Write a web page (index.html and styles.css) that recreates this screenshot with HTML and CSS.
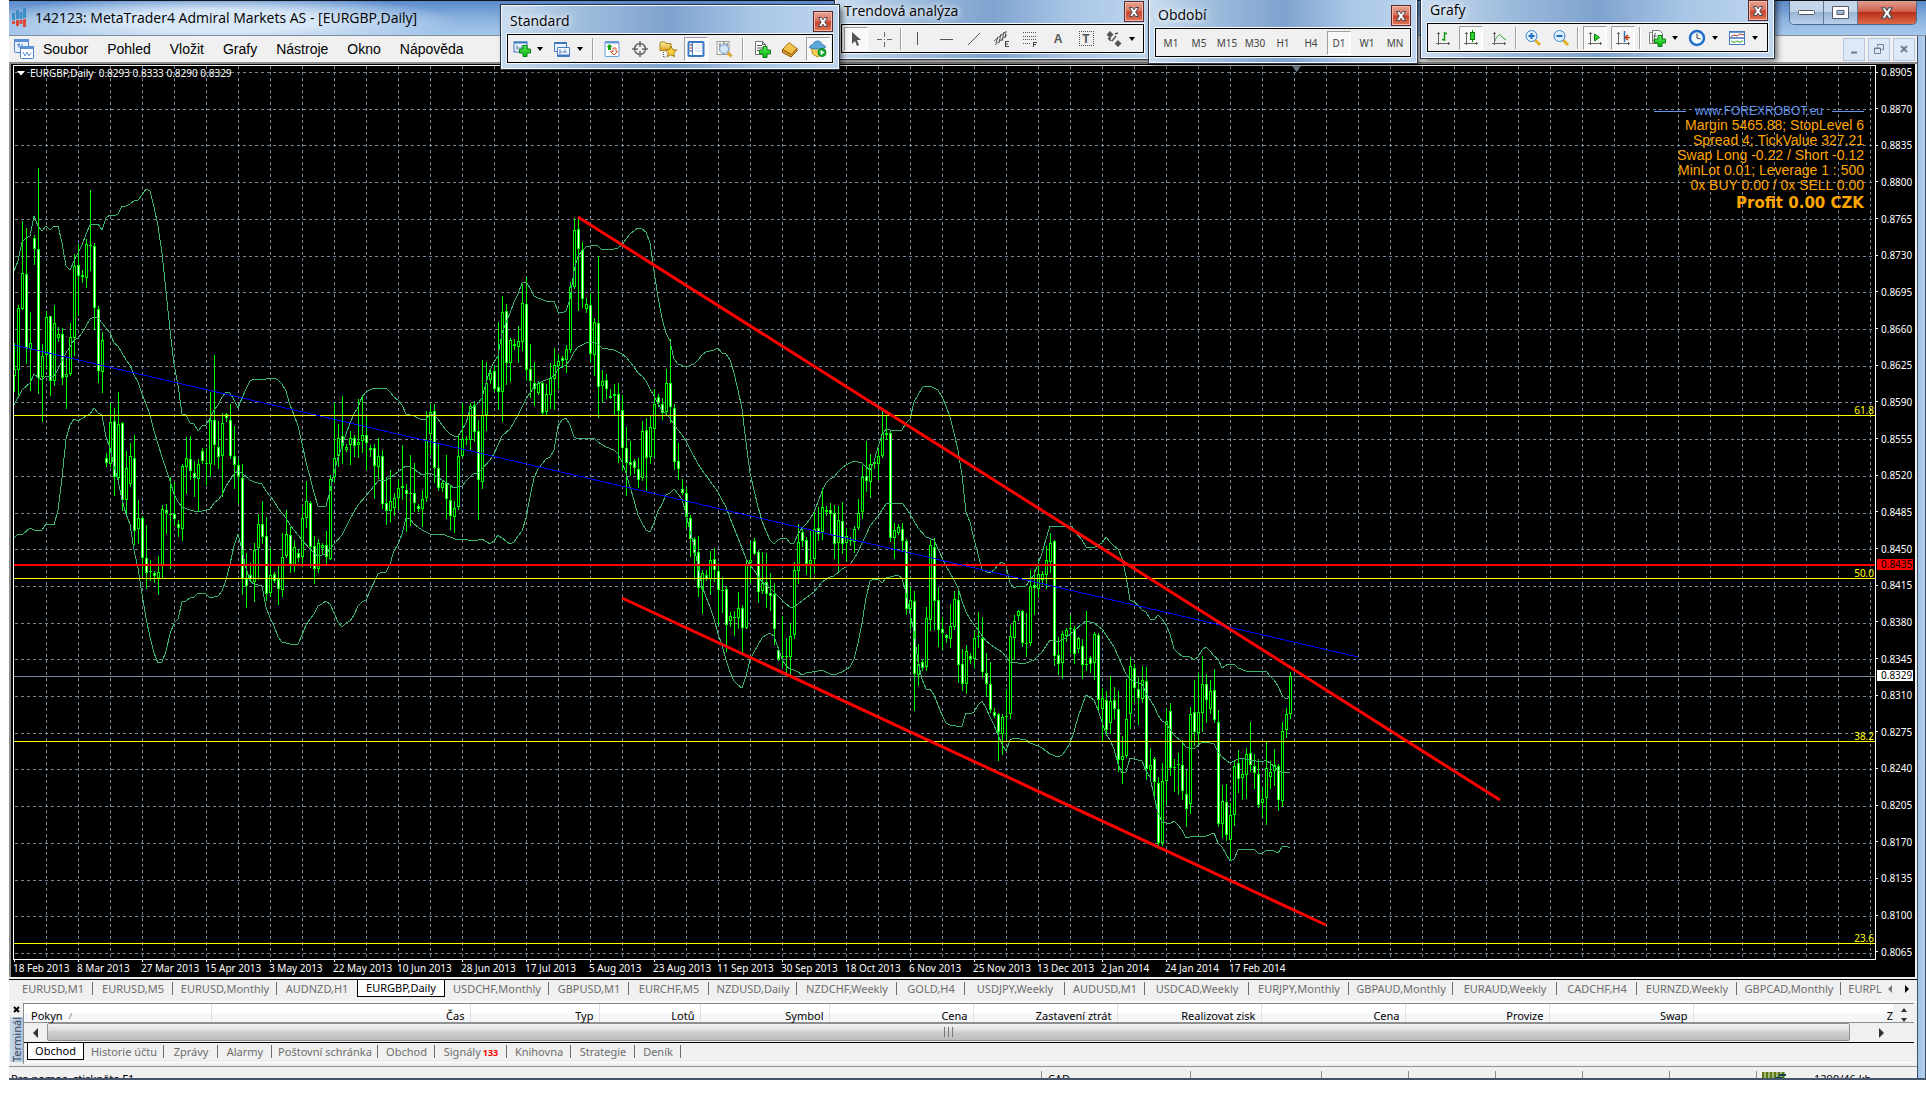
FILE: index.html
```html
<!DOCTYPE html>
<html lang="cs">
<head>
<meta charset="utf-8">
<title>142123: MetaTrader4 Admiral Markets AS - [EURGBP,Daily]</title>
<link rel="stylesheet" href="styles.css">
</head>
<body>
<svg class="defs" width="0" height="0" aria-hidden="true">
  <defs>
    <linearGradient id="gGreen" x1="0" y1="0" x2="0" y2="1"><stop offset="0" stop-color="#5df05d"/><stop offset="1" stop-color="#06b506"/></linearGradient>
    <linearGradient id="gGold" x1="0" y1="0" x2="0" y2="1"><stop offset="0" stop-color="#fff0a0"/><stop offset="1" stop-color="#d9a520"/></linearGradient>
    <symbol id="plus" viewBox="0 0 12 12"><path d="M4 .5h4V4h3.500v4H8v3.500H4V8H.5V4H4z" fill="url(#gGreen)" stroke="#0a7d14"/></symbol>
    <symbol id="axes" viewBox="0 0 18 18"><path d="M4.500 3v13M2 14.500h14M3 4.500h3M14.500 13v3" fill="none" stroke="#666"/></symbol>
    <symbol id="close" viewBox="0 0 12 12"><path d="M1.500 1.500h3L6 3.800l1.500-2.300h3L7.800 6l2.700 4.500h-3L6 8.200l-1.500 2.300h-3L4.200 6z" fill="#fff" stroke="#4a4a55"/></symbol>
    <symbol id="drop" viewBox="0 0 6 4"><path d="M0 0h6L3 4z" fill="#000"/></symbol>
  </defs>
</svg>

<div class="app">
  <header class="titlebar">
    <svg class="logo" viewBox="0 0 14 20" width="14" height="20"><path d="M0 5h3v7H0zM4 2h3v9H4zM7.500 4h3v7h-3zM11 0h3v10h-3z" fill="#3c8dc5"/><path d="M0 13h3v3H0zM4 12h3v6H4zM7.500 12h3v4h-3zM11 11h3v8h-3z" fill="#d9483b"/></svg>
    <h1 class="title">142123: MetaTrader4 Admiral Markets AS - [EURGBP,Daily]</h1>
    <div class="winctl">
      <button class="wbtn" aria-label="Minimalizovat"><svg width="18" height="6" viewBox="0 0 18 6"><rect x=".5" y=".5" width="16" height="4" rx="1" fill="#fff" stroke="#555b66"/></svg></button>
      <button class="wbtn" aria-label="Maximalizovat"><svg width="18" height="14" viewBox="0 0 18 14"><path d="M.5.5h16v12H.5zM5 4.500v4h7v-4z" fill="#fff" fill-rule="evenodd" stroke="#555b66"/></svg></button>
      <button class="wbtn wclose" aria-label="Zavřít"><svg width="16" height="14"><use href="#close"/></svg></button>
    </div>
  </header>

  <nav class="menubar">
    <svg class="menuicon" width="20" height="20" viewBox="0 0 20 20"><rect x=".5" y=".5" width="14" height="13" rx="1" fill="#e8f1fc" stroke="#4f81c7"/><rect x="0" y="0" width="15" height="3" fill="#5b8fd6"/><path d="M3 6h3M5 4v5M8 5v4" stroke="#4f81c7"/><rect x="6.500" y="7.500" width="13" height="12" rx="1" fill="#fff" stroke="#4f81c7"/><rect x="6" y="7" width="14" height="3" fill="#5b8fd6"/><path d="M9 13l2 4 2-4 2 4 2-3" fill="none" stroke="#5a8fd0"/></svg>
    <button class="menu">Soubor</button><button class="menu">Pohled</button><button class="menu">Vložit</button><button class="menu">Grafy</button><button class="menu">Nástroje</button><button class="menu">Okno</button><button class="menu">Nápověda</button>
    <div class="mdictl">
      <button class="mdi" aria-label="Minimalizovat graf"><svg width="12" height="12"><path d="M3 9.500h6" stroke="#6b7f95" stroke-width="2"/></svg></button>
      <button class="mdi" aria-label="Obnovit graf"><svg width="12" height="12"><path d="M4.500 3.500v-2h6v5h-2M1.500 5h6v5.500h-6zM1.500 5.500h6" fill="none" stroke="#6b7f95"/></svg></button>
      <button class="mdi" aria-label="Zavřít graf"><svg width="12" height="12"><path d="M3 3l6 6M9 3l-6 6" stroke="#6b7f95" stroke-width="2"/></svg></button>
    </div>
  </nav>

  <main class="chart">
    <div class="plotrow">
      <div class="plot">
        <svg id="plot" class="plotsvg" role="img" aria-label="EURGBP, Daily"></svg>
        <div class="quote"><svg width="8" height="5" viewBox="0 0 8 5"><path d="M0 0h8L4 4.500z" fill="#fff"/></svg><span>EURGBP,Daily&nbsp; 0.8293 0.8333 0.8290 0.8329</span></div>
        <svg class="shift" width="9" height="6" viewBox="0 0 9 6"><path d="M0 0h9L4.500 6z" fill="#778899"/></svg>
        <div class="info">
          <div class="site"><i></i><span>www.FOREXROBOT.eu</span><i></i></div>
          <div>Margin 5465.88; StopLevel 6</div>
          <div>Spread 4; TickValue 327.21</div>
          <div>Swap Long -0.22 / Short -0.12</div>
          <div>MinLot 0.01; Leverage 1 : 500</div>
          <div>0x BUY 0.00 / 0x SELL 0.00</div>
          <div class="profit">Profit 0.00 CZK</div>
        </div>
        <span class="fib f618">61.8</span><span class="fib f500">50.0</span><span class="fib f382">38.2</span><span class="fib f236">23.6</span>
      </div>
      <div class="prices" id="prices"><span class="mark red">0.8435</span><span class="mark now">0.8329</span></div>
    </div>
    <div class="dates" id="dates"></div>
  </main>

  <div class="symbols">
    <div class="symlist">
      <button class="tab w80">EURUSD,M1</button><button class="tab w80">EURUSD,M5</button><button class="tab w104">EURUSD,Monthly</button><button class="tab w80 last">AUDNZD,H1</button><button class="tab w88 active">EURGBP,Daily</button><button class="tab w104">USDCHF,Monthly</button><button class="tab w80">GBPUSD,M1</button><button class="tab w80">EURCHF,M5</button><button class="tab w88">NZDUSD,Daily</button><button class="tab w100">NZDCHF,Weekly</button><button class="tab w68">GOLD,H4</button><button class="tab w100">USDJPY,Weekly</button><button class="tab w80">AUDUSD,M1</button><button class="tab w104">USDCAD,Weekly</button><button class="tab w100">EURJPY,Monthly</button><button class="tab w104">GBPAUD,Monthly</button><button class="tab w104">EURAUD,Weekly</button><button class="tab w80">CADCHF,H4</button><button class="tab w100">EURNZD,Weekly</button><button class="tab w104">GBPCAD,Monthly</button><button class="tab w48 last">EURPL</button>
    </div>
    <button class="arrow" aria-label="Předchozí"><svg width="5" height="8"><path d="M4 0v8L0 4z" fill="#777"/></svg></button>
    <button class="arrow" aria-label="Další"><svg width="5" height="8"><path d="M0 0v8l4-4z" fill="#000"/></svg></button>
  </div>

  <section class="terminal">
    <div class="side"><button class="x" aria-label="Zavřít terminál"><svg width="7" height="7"><path d="M1 1l5 5M6 1L1 6" stroke="#000" stroke-width="2"/></svg></button><span class="vert">Terminál</span></div>
    <div class="panel">
      <div class="tablerow">
        <table class="orders">
          <colgroup><col class="c187"><col class="c259"><col class="c129"><col class="c101"><col class="c129"><col class="c144"><col class="c144"><col class="c144"><col class="c144"><col class="c144"><col class="c144"><col></colgroup>
          <thead><tr><th class="first">Pokyn &nbsp;<svg width="7" height="8"><path d="M1 7l3-6" stroke="#888"/></svg></th><th>Čas</th><th>Typ</th><th>Lotů</th><th>Symbol</th><th>Cena</th><th>Zastavení ztrát</th><th>Realizovat zisk</th><th>Cena</th><th>Provize</th><th>Swap</th><th class="end">Z</th></tr></thead>
        </table>
        <div class="spin"><svg width="8" height="14"><path d="M1 4h6L4 0zM1 10h6l-3 4z" fill="#333"/></svg></div>
      </div>
      <div class="scroll"><button class="sarrow" aria-label="Vlevo"><svg width="6" height="10"><path d="M5 0v10L0 5z" fill="#333"/></svg></button><div class="thumb"><svg width="11" height="10"><path d="M1.500 0v10M5.500 0v10M9.500 0v10" stroke="#777"/></svg></div><button class="sarrow wide" aria-label="Vpravo"><svg width="6" height="10"><path d="M0 0v10l5-5z" fill="#333"/></svg></button></div>
      <div class="ttabs">
        <button class="tab w57 active">Obchod</button><button class="tab w80">Historie účtu</button><button class="tab w54">Zprávy</button><button class="tab w54">Alarmy</button><button class="tab w106">Poštovní schránka</button><button class="tab w57">Obchod</button><button class="tab w72">Signály <b>133</b></button><button class="tab w64">Knihovna</button><button class="tab w64">Strategie</button><button class="tab w46">Deník</button>
      </div>
    </div>
  </section>

  <footer class="status">
    <span class="help">Pro pomoc, stiskněte F1</span><span class="s149">CAD</span><span class="s131"></span><span class="s87"></span><span class="s87"></span><span class="s87"></span><span class="s87"></span><span class="s87"></span>
    <span class="net"><svg width="24" height="10"><path d="M1 0v10M5 0v10M9 0v10M13 0v10M17 0v10M21 0v10" stroke="#5b7a0c" stroke-width="3"/><path d="M13 6h7M17 3h7" stroke="#123c5c" stroke-width="2"/></svg>1290/46 kb</span>
  </footer>
</div>

<section class="win w-std">
  <div class="wt"><span>Standard</span><button class="wx" aria-label="Zavřít"><svg width="14" height="12"><use href="#close"/></svg></button></div>
  <div class="tb">
    <span class="grp"><button class="ib" aria-label="Nový graf"><svg viewBox="0 0 18 18"><rect x="1" y="2" width="13" height="10" fill="#eaf2fc" stroke="#3f78c0"/><path d="M1 2.500h13" stroke="#3f78c0" stroke-width="2"/><path d="M4 5v5M3 8h8M9 5v3" stroke="#6d90b8" fill="none"/><use href="#plus" x="6" y="5" width="12" height="12"/></svg></button><button class="dd" aria-label="Více"><svg><use href="#drop"/></svg></button></span>
    <span class="grp"><button class="ib" aria-label="Profily"><svg viewBox="0 0 18 18"><path d="M1.500 2.500h12v9h-12z" fill="#eaf2fc" stroke="#4a7fc2"/><path d="M1 3h13" stroke="#3f78c0" stroke-width="2"/><path d="M4.500 7.500h12v9h-12z" fill="#f4f8fe" stroke="#4a7fc2"/><path d="M4 15.500h13" stroke="#3f78c0" stroke-width="2"/><path d="M7 9v5M6 12h8M12 9v4" stroke="#6d90b8"/></svg></button><button class="dd" aria-label="Více"><svg><use href="#drop"/></svg></button></span>
    <i class="sep wide"></i>
    <button class="ib" aria-label="Přehled trhu"><svg viewBox="0 0 18 18"><rect x="2" y="1.500" width="14" height="15" rx="1" fill="#fff" stroke="#6a9ad8"/><path d="M2 2.500h14" stroke="#6a9ad8" stroke-width="2"/><path d="M6.500 4l3 3H8v3H5V7H3.500z" fill="#19a319"/><path d="M11 15l3.500-3.500H13V8h-3v3.500H7.500z" fill="#fff" stroke="#e2562a"/></svg></button>
    <button class="ib" aria-label="Datové okno"><svg viewBox="0 0 18 18"><circle cx="9" cy="9" r="5.500" fill="none" stroke="#666" stroke-width="1.500"/><path d="M9 1v6M9 11v6M1 9h6M11 9h6" stroke="#666" stroke-width="1.500"/></svg></button>
    <button class="ib" aria-label="Navigátor"><svg viewBox="0 0 18 18"><path d="M1 3l1-1h4l1 1.500h5v7H1z" fill="url(#gGold)" stroke="#a8821b"/><path d="M4.500 12v5h3" fill="none" stroke="#555" stroke-dasharray="1 1"/><path d="M12 6l1.700 3.700 4 .4-3 2.700.9 4L12 14.700l-3.600 2.100.9-4-3-2.700 4-.4z" fill="#ffd23c" stroke="#a07a10"/></svg></button>
    <button class="ib on" aria-label="Terminál"><svg viewBox="0 0 18 18"><rect x="1.500" y="2" width="15" height="14" rx="1" fill="#fff" stroke="#3b78c4" stroke-width="2"/><path d="M5.500 3v12" stroke="#3b78c4"/><path d="M3 5h2M3 11h2" stroke="#222"/><path d="M3 8h2" stroke="#d22"/><path d="M8 5h7M8 8h7M8 11h7" stroke="#c9d8ea"/></svg></button>
    <button class="ib" aria-label="Tester strategií"><svg viewBox="0 0 18 18"><rect x="2" y="1.500" width="12" height="13" fill="#f5f5f0" stroke="#9a9a9a"/><path d="M5 3v8M9 2v5M12 3v5" stroke="#555"/><circle cx="9" cy="9" r="4.500" fill="#cfe6fa" fill-opacity=".9" stroke="#78a7d6"/><path d="M12.500 12.500l4 4" stroke="#e0a52a" stroke-width="3"/></svg></button>
    <i class="sep wide"></i>
    <button class="ib" aria-label="Nový pokyn"><svg viewBox="0 0 18 18"><path d="M2.500 1.500h7l3 3v10h-10z" fill="#fff" stroke="#777"/><path d="M9.500 1.500v3h3M4 5.500h5M4 8h6M4 10.500h5" fill="none" stroke="#555"/><use href="#plus" x="6" y="6" width="12" height="12"/></svg></button>
    <button class="ib" aria-label="MetaEditor"><svg viewBox="0 0 18 18"><path d="M1.500 9.500l6.500-7 8 6-5.500 6z" fill="#f2c14a" stroke="#a8720f"/><path d="M1.500 9.500v3l8.500 4.500 6-6v-2.500l-5.500 6z" fill="#d9992a" stroke="#8f600c"/></svg></button>
    <button class="ib on" aria-label="AutoTrading"><svg viewBox="0 0 18 18"><path d="M2.500 8.500h12l-1 5-5 3.500-5-3z" fill="#f5cf52" stroke="#b58f1b"/><path d="M.5 7.500c0-2 3-3 4-3.500 0-4 8-4 8 0 1 .5 4 1.500 4 3.500-4 2-12 2-16 0z" fill="#5da9dc" stroke="#3b83b8"/><circle cx="13" cy="12.500" r="4" fill="#1fb53a" stroke="#0d7f23"/><path d="M11.700 10v5l3.500-2.500z" fill="#fff"/></svg></button>
  </div>
</section>

<section class="win w-trend">
  <div class="wt"><span>Trendová analýza</span><button class="wx" aria-label="Zavřít"><svg width="14" height="12"><use href="#close"/></svg></button></div>
  <div class="tb">
    <button class="ib on" aria-label="Kurzor"><svg viewBox="0 0 18 18"><path d="M5 2v12l3-3 2 5 2-1-2-5h4z" fill="#555"/></svg></button>
    <button class="ib" aria-label="Zaměřovač"><svg viewBox="0 0 18 18"><path d="M9.500 2v5M9.500 12v5M2 9.500h5M12 9.500h5M9 9.500h1" stroke="#666" fill="none"/></svg></button>
    <i class="sep"></i>
    <button class="ib" aria-label="Svislá čára"><svg viewBox="0 0 18 18"><path d="M8.500 2v13" stroke="#555"/></svg></button>
    <button class="ib" aria-label="Vodorovná čára"><svg viewBox="0 0 18 18"><path d="M3 9.500h13" stroke="#555"/></svg></button>
    <button class="ib" aria-label="Trendová čára"><svg viewBox="0 0 18 18"><path d="M3 15L15 3" stroke="#555"/></svg></button>
    <button class="ib" aria-label="Kanál"><svg viewBox="0 0 18 18"><path d="M1 11L12 2M2 15L14 5M3 13l2-6M6 13l2-9M9 11l2-9M12 8l1-7" stroke="#555"/><path d="M12.500 11.500v5M12 11.500h4M12 14h3M12 16.500h4" stroke="#444" fill="none"/></svg></button>
    <button class="ib" aria-label="Fibonacci"><svg viewBox="0 0 18 18"><path d="M2 2.500h14M2 6.500h14M2 9.500h14M2 13.500h8" stroke="#555" stroke-dasharray="1 1"/><path d="M12.500 12v5M12 12.500h4M12 14.500h3" stroke="#444" fill="none"/></svg></button>
    <button class="ib txt" aria-label="Text">A</button>
    <button class="ib txt" aria-label="Textový popisek"><span class="tl">T</span></button>
    <span class="grp"><button class="ib" aria-label="Šipky"><svg viewBox="0 0 18 18"><path d="M5 1l3.500 3.500L5 8 1.500 4.500zM13 10l3.500 3.500L13 17l-3.500-3.500z" fill="#555"/><path d="M7 11l4-5M3 8l3 3M10 4l3-1M5 6v4" stroke="#555" stroke-width="1.500"/></svg></button><button class="dd" aria-label="Více"><svg><use href="#drop"/></svg></button></span>
  </div>
</section>

<section class="win w-per">
  <div class="wt"><span>Období</span><button class="wx" aria-label="Zavřít"><svg width="14" height="12"><use href="#close"/></svg></button></div>
  <div class="tb pad">
    <button class="ib tf">M1</button><button class="ib tf">M5</button><button class="ib tf">M15</button><button class="ib tf">M30</button><button class="ib tf">H1</button><button class="ib tf">H4</button><button class="ib tf on">D1</button><button class="ib tf">W1</button><button class="ib tf">MN</button>
  </div>
</section>

<section class="win w-graf">
  <div class="wt"><span>Grafy</span><button class="wx" aria-label="Zavřít"><svg width="14" height="12"><use href="#close"/></svg></button></div>
  <div class="tb pad">
    <button class="ib" aria-label="Sloupcový graf"><svg viewBox="0 0 18 18"><use href="#axes"/><path d="M10.500 3v9M8 10.500h2.500M10.500 4.500H13" stroke="#159a15" stroke-width="1.500" fill="none"/></svg></button>
    <button class="ib on" aria-label="Svíčkový graf"><svg viewBox="0 0 18 18"><use href="#axes"/><path d="M10.500 1v12" stroke="#0b7d0b"/><rect x="8.500" y="3.500" width="4" height="7" fill="#2fd32f" stroke="#0b7d0b"/></svg></button>
    <button class="ib" aria-label="Čárový graf"><svg viewBox="0 0 18 18"><use href="#axes"/><path d="M5 12c2-6 5-8 7-4l4 3" stroke="#2fa02f" fill="none"/></svg></button>
    <i class="sep"></i>
    <button class="ib" aria-label="Přiblížit"><svg viewBox="0 0 18 18"><path d="M11 11l5 5" stroke="#e0b02a" stroke-width="3"/><circle cx="7.500" cy="7" r="5.500" fill="#dff0fd" stroke="#3a84d0"/><path d="M7.500 4v6M4.500 7h6" stroke="#1f6fc0" stroke-width="2"/></svg></button>
    <button class="ib" aria-label="Oddálit"><svg viewBox="0 0 18 18"><path d="M11 11l5 5" stroke="#e0b02a" stroke-width="3"/><circle cx="7.500" cy="7" r="5.500" fill="#dff0fd" stroke="#3a84d0"/><path d="M4.500 7h6" stroke="#1f6fc0" stroke-width="2"/></svg></button>
    <i class="sep"></i>
    <button class="ib on" aria-label="Automatický posun"><svg viewBox="0 0 18 18"><use href="#axes"/><path d="M8.500 5v7l5-3.500z" fill="#2fd32f" stroke="#0b7d0b"/></svg></button>
    <button class="ib on" aria-label="Posun grafu"><svg viewBox="0 0 18 18"><use href="#axes"/><path d="M10.500 2v11" stroke="#2f72b8" stroke-width="1.500"/><path d="M16 8.500h-4M14 6l-3 2.500 3 2.500" stroke="#c0401a" fill="none" stroke-width="1.500"/></svg></button>
    <i class="sep"></i>
    <span class="grp"><button class="ib" aria-label="Indikátory"><svg viewBox="0 0 18 18"><path d="M1.500 3.500h7l2 2v9h-9z" fill="#fff" stroke="#888"/><path d="M4.500 1.500h7l3 3v9h-10z" fill="#fff" stroke="#777"/><path d="M8 4c-2 0-1 8-3 8M5.500 7h3" stroke="#555" fill="none"/><use href="#plus" x="6" y="6" width="12" height="12"/></svg></button><button class="dd" aria-label="Více"><svg><use href="#drop"/></svg></button></span>
    <span class="grp"><button class="ib" aria-label="Periody"><svg viewBox="0 0 18 18"><circle cx="9" cy="9" r="7" fill="#f2f8ff" stroke="#1f6fc9" stroke-width="2.500"/><path d="M9 4.500V9l3.500 1" stroke="#333" fill="none"/></svg></button><button class="dd" aria-label="Více"><svg><use href="#drop"/></svg></button></span>
    <span class="grp"><button class="ib" aria-label="Šablony"><svg viewBox="0 0 18 18"><rect x="1.500" y="2.500" width="15" height="13" fill="#fff" stroke="#3f78c0"/><path d="M1 3h16M1 9h16" stroke="#3f78c0" stroke-width="1.500"/><path d="M3 7.500l3-1.500 3 1 3-2 4 1" stroke="#a33" fill="none"/><path d="M3 12l3 1.500 3-1.500 3 1.500 3-2" stroke="#2a2" fill="none"/></svg></button><button class="dd" aria-label="Více"><svg><use href="#drop"/></svg></button></span>
  </div>
</section>
<script src="chart.js"></script>
</body>
</html>
```
FILE: styles.css
```css
* { box-sizing: border-box; }
body { margin: 0; background: #fff; font: 11px/12px "Noto Sans", "Open Sans", sans-serif; color: #000; overflow-x: hidden; }
button { font: inherit; color: inherit; border: 0; padding: 0; margin: 0; background: none; display: flex; align-items: center; justify-content: center; }
.defs { position: absolute; }

.app { margin-left: 9px; padding-right: 9px; border-top: 1px solid #10131c; border-bottom: 2px solid #45566c;
  background: linear-gradient(to left, #3d5068 1px, #b4d1ef 1px, #a3c3e6 8px, #3d5068 8px, #3d5068 9px, #f0f0f0 9px); }
.titlebar { display: flex; align-items: center; height: 35px; margin-right: -9px; padding-left: 3px; border-bottom: 1px solid #7f8da0;
  background: radial-gradient(ellipse 240px 26px at 210px 20px, #d9e8f7 40%, #d9e8f700 100%), linear-gradient(180deg, #5a8bcb 0, #8db4e0 55%, #a6c8ec 100%); }
.logo { margin-right: 9px; }
.title { margin: 0; font: 14px/20px "Open Sans", "Noto Sans", sans-serif; white-space: nowrap; flex: 1; }
.winctl { display: flex; align-self: flex-start; height: 24px; border: 1px solid #4b6688; border-top: 0; border-radius: 0 0 5px 5px; margin-right: 9px; overflow: hidden; }
.wbtn { width: 34px; background: linear-gradient(#c4d6ea 45%, #9ab5d3 50%, #b9d0ea); border-right: 1px solid #5c7797; }
.wclose { width: 58px; border: 0; background: linear-gradient(#e0a08f 0, #d0604c 45%, #b8301a 50%, #dd6a45); }
.menubar { display: flex; align-items: center; height: 26px; padding-left: 5px; font: 14px/20px "Liberation Sans", Arial, sans-serif; }
.menuicon { margin-right: 9px; }
.menu { margin-right: 19px; }
.mdictl { display: flex; gap: 3px; margin-left: auto; margin-right: 2px; }
.mdi { width: 22px; height: 23px; background: #dde9f6; border: 1px solid #b5c8de; }

.chart { background: #000; border: solid #8c8c8c; border-width: 2px 0 0 2px; box-shadow: inset -2px 0 #f0f0f0; padding: 1px 2px 0; color: #fff; }
.plotrow { display: flex; }
.plot { flex: 1; min-width: 0; position: relative; border: 1px solid #fff; overflow: hidden; }
.plotsvg { display: block; width: 100%; height: 893px; }
.quote { position: absolute; left: 3px; top: 1px; display: flex; gap: 5px; align-items: center; white-space: nowrap; font-size: 10px; }
.shift { position: absolute; left: 1278px; top: 0; }
.info { position: absolute; right: 11px; top: 39px; text-align: right; color: #ffa500; font: 14px/15px "Liberation Sans", Arial, sans-serif; white-space: nowrap; }
.site { display: flex; align-items: center; justify-content: flex-end; gap: 9px; height: 13px; color: #6495ed; }
.site span { font-size: 12px; }
.site i { width: 32px; height: 1px; background: #6495ed; }
.profit { font: bold 15px/20px "DejaVu Sans", Verdana, sans-serif; }
.fib { position: absolute; right: 1px; color: #ff0; font-size: 10px; line-height: 10px; }
.f618 { top: 339px; } .f500 { top: 502px; } .f382 { top: 665px; } .f236 { top: 867px; }
.prices { position: relative; width: 39px; height: 894px; padding: 1px 0; display: flex; flex-direction: column; justify-content: space-between; font-size: 10px; }
.price { display: flex; align-items: center; gap: 3px; }
.price::before { content: ""; width: 2px; height: 1px; background: #fff; }
.mark { position: absolute; left: 1px; width: 36px; height: 11px; line-height: 11px; padding-left: 4px; }
.red { top: 494px; background: #f00; color: #000; }
.now { top: 605px; background: #fff; color: #000; }
.dates { display: flex; height: 17px; overflow: hidden; font-size: 10px; line-height: 12px; }
.date { flex: 0 0 64px; white-space: nowrap; }
.date::before { content: ""; display: block; width: 1px; height: 2px; margin-left: 1px; background: #fff; }

.tab { flex: none; height: 17px; white-space: nowrap; color: #6d6d6d; position: relative; }
.tab::after { content: ""; position: absolute; right: 0; top: 2px; width: 1px; height: 13px; background: #6d6d6d; }
.tab.active { background: #fff; color: #000; border: 1px solid #000; border-top: 0; }
.tab.last::after, .tab.active::after { display: none; }
.w46 { width: 46px; } .w48 { width: 48px; } .w54 { width: 54px; } .w57 { width: 57px; } .w64 { width: 64px; } .w68 { width: 68px; } .w72 { width: 72px; }
.w80 { width: 80px; } .w88 { width: 88px; } .w100 { width: 100px; } .w104 { width: 104px; } .w106 { width: 106px; }
.symbols { display: flex; margin-top: 2px; height: 23px; border-top: 1px solid #000; border-bottom: 1px solid #fff; padding: 0 1px 0 4px; }
.symlist { display: flex; flex: 1; min-width: 0; overflow: hidden; }
.arrow { width: 17px; height: 18px; }

.terminal { display: flex; margin-top: 1px; }
.side { width: 14px; padding: 1px 0 2px; display: flex; flex-direction: column; align-items: center; }
.x { height: 10px; }
.vert { flex: 1; width: 13px; margin-top: 3px; writing-mode: vertical-rl; transform: rotate(180deg); text-align: center; font-size: 11px; line-height: 13px; color: #445; background: linear-gradient(90deg, #aac3dc, #c6d8ea); }
.panel { flex: 1; min-width: 0; margin-right: 3px; border-top: 1px solid #8e8e8e; border-left: 1px solid #8e8e8e; }
.tablerow { display: flex; height: 18px; }
.orders { flex: 1; min-width: 0; table-layout: fixed; width: 100%; border-collapse: collapse; background: linear-gradient(#fff 50%, #f5f6f8 55%); }
.orders th { font-weight: 400; text-align: right; padding: 5px 5px 0 0; height: 18px; line-height: 13px; border-right: 1px solid #dfdfe3; white-space: nowrap; }
.orders th.first { text-align: left; padding-left: 7px; }
.orders th.end { padding-right: 0; border: 0; }
.c187 { width: 187px; } .c259 { width: 259px; } .c129 { width: 129px; } .c101 { width: 101px; } .c144 { width: 144px; }
.spin { width: 21px; display: flex; justify-content: center; align-items: flex-end; }
.scroll { display: flex; height: 20px; border-top: 1px solid #8e8e8e; }
.sarrow { width: 23px; }
.sarrow.wide { width: 64px; }
.thumb { flex: 1; height: 18px; border: 1px solid #909090; border-radius: 2px; background: linear-gradient(#f2f2f2 0, #dedee0 40%, #cdcdd0 50%, #bdbdc0); display: flex; align-items: center; justify-content: center; }
.ttabs { display: flex; border-top: 1px solid #000; padding-left: 3px; height: 21px; border-bottom: 1px solid #fff; }
.ttabs b { color: #f00; font-size: 9px; margin-left: 2px; padding-top: 3px; }

.status { display: flex; height: 12px; overflow: hidden; border-top: 1px solid #8e8e8e; margin-top: 2px; line-height: 14px; padding-top: 4px; white-space: nowrap; }
.status span { padding: 1px 0 0 6px; border-left: 1px solid #8e8e8e; }
.status .help { flex: 1; border: 0; padding-left: 2px; }
.s149 { width: 149px; } .s131 { width: 131px; } .s87 { width: 87px; }
.status .net { width: 161px; display: flex; gap: 28px; padding-left: 5px; }

.win { position: absolute; height: 64px; padding: 0 5px 6px; border: 1px solid #f4f8fc; outline: 1px solid #2a3442;
  background: linear-gradient(90deg, #c9dcef 0, #9dbbdc 25%, #7fa3cf 50%, #a9c6e6 75%, #bfd6ee 100%); box-shadow: 3px 3px 6px #0009; }
.wt { display: flex; justify-content: space-between; height: 28px; padding-left: 3px; }
.wt span { font: 14px/30px "Open Sans", "Noto Sans", sans-serif; text-shadow: 0 0 8px #fff, 0 0 6px #fff; }
.wx { width: 20px; height: 21px; margin-top: 5px; border: 1px solid #5a2a2a; box-shadow: inset 0 0 0 1px #f2b9ac; background: linear-gradient(#e9a695 0, #d9705b 48%, #c6402a 52%, #de7757); }
.tb { display: flex; align-items: center; gap: 4px; height: 29px; padding: 0 0 0 2px; background: #f0f0f0; border: 1px solid #000; outline: 1px solid #f4f8fc; }
.tb.pad { padding-left: 3px; }
.w-std { left: 501px; top: 5px; width: 338px; z-index: 3; }
.w-trend { left: 835px; top: -5px; width: 315px; z-index: 1; }
.w-per { left: 1149px; top: -1px; width: 268px; z-index: 2; }
.w-graf { left: 1421px; top: -6px; width: 353px; z-index: 2; }
.grp { display: flex; }
.ib { width: 24px; height: 24px; flex: none; border: 1px solid transparent; }
.ib svg { width: 18px; height: 18px; }
.ib.on { background: #f8f8f8; border-color: #a0a0a0 #fff #fff #a0a0a0; }
.dd { width: 12px; }
.dd svg { width: 6px; height: 4px; }
.sep { width: 2px; height: 22px; background: #a0a0a0; border-right: 1px solid #fff; }
.sep.wide { margin: 0 2px; }
.tf { font-size: 10px; color: #444; }
.txt { font: bold 12px/16px "Liberation Sans", Arial, sans-serif; color: #555; }
.tl { width: 15px; height: 15px; line-height: 14px; border: 1px dotted #555; }
```
FILE: chart.js
```js
// Daily EURGBP series in drawing blocks. Each block has its own origin and
// vertical divisor; rows are: high, body top, body bottom, low, direction.
const BLOCKS = [
  { start: 0, x: -14, y: 64, k: 2.8, rows: `595 670 690 732 u|490 499 673 738 u|255 399 502 502 u|274 402 610 652 d|510 595 613 727 u|294 301 334 374 d|106 332 695 735 d|598 634 692 815 u|507 524 631 668 u|522 522 702 742 d|490 539 704 715 u|552 570 583 590 u|555 572 695 712 d|638 684 692 778 u|540 580 682 685 u|348 380 583 629 u|320 377 409 517 d|392 406 412 426 u|305 320 415 439 u|168 322 326 392 d|315 324 499 556 d|493 502 676 706 d|566 589 678 733 u|903 918 931 942 d|765 818 934 942 u|778 816 972 1022 d|734 824 975 981 u|818 821 1036 1064 d|898 947 1035 1075 u|877 914 992 998 u|854 917 1122 1158 d|1037 1087 1118 1155 u|1080 1085 1199 1245 d|1105 1197 1241 1281 d|1204 1235 1238 1260 d|1235 1240 1248 1265 d|1194 1238 1253 1298 u|1050 1062 1222 1255 u|1047 1065 1073 1127 d|972 1074 1077 1225 d|985 1074 1090 1105 d|1092 1104 1115 1138 d|936 942 1118 1147 u|860 919 944 1015 u|857 922 956 978 d|927 960 975 1025 d|921 934 978 1064 u|890 900 928 931 d|889 931 934 990 u|734 812 936 968 u|630 813 883 934 d|815 887 915 946 d|791 819 913 1025 u|791 795 807 815 d|768 811 912 918 d|830 914 938 1002 d|920 937 970 1043 d|935 973 1257 1299 d|1185 1256 1278 1335 d|1213 1245 1256 1262 d|1157 1175 1265 1318 u|1075 1104 1170 1256 u|1040 1102 1140 1155 d|1084 1138 1300 1316 d|1170 1247 1297 1306 u|1238 1244 1262 1266 d|1222 1257 1286 1327 d|1128 1196 1289 1305 u|1064 1130 1194 1196 u|1112 1135 1216 1237 d|1148 1168 1222 1236 u|1174 1184 1199 1206 d|1053 1085 1196 1222 u|983 1040 1087 1112 u|1040 1043 1168 1223 d|1136 1166 1228 1267 d|1145 1157 1230 1238 u|1156 1161 1171 1186 u|1122 1163 1196 1212 d|966 976 1200 1202 u|765 917 972 984 u|824 861 914 940 u|745 858 884 932 d|878 887 897 898 u|844 861 883 934 u|855 863 886 913 d|754 873 883 915 u|742 853 870 902 u|803 855 875 950 d|882 891 897 912 u|878 889 942 1030 d|861 912 944 974 u|897 914 1046 1057 d|972 1043 1066 1103 d|953 1040 1068 1096 u|1015 1029 1059 1078 u|978 1001 1031 1062 u|882 998 1003 1032 u|992 1007 1018 1124 d|910 1017 1020 1106 u|932 1016 1043 1066 d|1047 1054 1062 1068 d|1008 1034 1062 1108 u|786 868 1031 1039 u|766 789 852 906 u|767 786 946 986 d|877 945 1003 1009 d|980 988 1003 1011 u|911 987 1034 1085 d|994 1037 1082 1116 d|1038 1059 1084 1125 u|856 912 1056 1060 u|763 864 914 916 u|857 864 868 878 u|765 772 867 892 u|760 769 846 872 d|812 844 980 1088 d` },
  { start: 117, x: 436, y: 114, k: 2.9037, rows: `523 681 876 893 u|528 590 683 725 u|548 559 580 588 u|538 556 606 613 d|412 602 617 665 d|337 384 615 700 u|360 381 532 592 d|459 464 530 584 u|462 477 481 490 d|424 468 484 528 u|302 358 471 494 u|283 361 553 578 d|477 550 585 630 d|528 588 607 653 d|585 590 619 622 u|584 588 676 682 d|592 622 673 680 u|530 576 625 662 u|488 538 579 665 u|505 527 541 604 u|512 518 526 543 d|479 492 523 557 u|296 310 495 498 u|110 146 312 314 u|108 143 199 377 d|180 202 346 370 d|343 361 376 382 u|328 364 506 529 d|402 413 509 567 u|222 416 602 687 d|552 585 599 645 u|562 582 608 633 d|606 626 632 633 d|592 622 628 683 u|590 620 672 820 d|624 669 779 841 d|717 777 823 915 d|758 820 828 857 d|810 815 837 852 d|807 840 870 890 d|701 730 866 871 u|690 727 808 903 d|685 718 805 823 u|608 651 724 800 u|622 631 648 657 d|633 651 678 693 d|549 588 675 679 u|462 590 660 703 d|650 663 818 838 d|765 815 840 868 d|868 896 910 911 d|890 908 978 1008 d|974 980 1043 1093 d|1038 1043 1082 1158 d|1035 1079 1184 1208 d|1132 1142 1187 1257 u|1133 1148 1158 1161 d|1077 1102 1158 1202 u|1070 1100 1133 1163 d|1113 1136 1191 1290 d|1152 1191 1194 1254 d|1178 1189 1293 1368 d|1254 1267 1280 1295 u|1252 1268 1271 1320 u|1196 1244 1271 1300 u|1234 1242 1302 1377 d|1107 1115 1300 1302 u|1048 1102 1111 1167 u|1040 1049 1085 1086 d|1074 1081 1197 1225 d|1080 1170 1192 1198 u|1084 1168 1203 1240 d|1140 1200 1207 1248 d|1170 1203 1305 1348 d|1355 1365 1392 1394 d|1266 1381 1384 1415 d|1330 1383 1386 1432 u|1286 1325 1384 1433 u|1110 1133 1322 1329 u|999 1050 1136 1170 u|1010 1023 1049 1062 d|1036 1046 1115 1143 d|1020 1103 1116 1158 u|965 1014 1100 1140 u|950 1010 1027 1045 d|893 950 1022 1042 u|948 959 963 972 u|938 957 969 1024 d|945 968 1056 1098 d|948 988 1054 1138 u|935 991 1056 1083 d|1010 1035 1053 1106 u|1036 1044 1047 1060 u|1005 1014 1050 1080 u|926 968 1010 1012 u|828 863 963 982 u|758 860 873 903 d|796 825 876 920 u|806 818 826 836 u|778 800 824 868 u|672 737 802 803 u|682 735 739 753 d|730 734 1040 1047 d|995 1017 1039 1098 u|1000 1009 1026 1028 u|997 1012 1047 1077 d|1042 1049 1247 1260 d` },
  { start: 224, x: 866, y: 294, k: 2.9585, rows: `672 710 736 794 u|683 714 928 1034 d|840 900 932 962 u|884 894 912 918 d|732 764 909 916 u|533 548 770 798 u|527 552 714 797 d|672 711 800 846 d|760 797 808 855 d|811 813 823 833 d|722 788 826 850 u|683 708 791 796 u|680 711 903 953 d|855 900 958 975 d|842 862 960 985 u|866 877 886 896 d|800 821 884 908 u|746 817 820 848 u|760 821 924 938 d|868 927 960 994 d|893 958 1034 1040 d|1030 1042 1052 1056 d|1044 1048 1102 1183 d|1046 1057 1105 1166 u|973 1052 1055 1118 u|783 818 1047 1058 u|753 772 821 885 u|740 742 757 769 u|740 744 836 846 d|748 838 841 876 u|622 670 838 843 u|622 667 676 752 d|592 632 678 702 u|625 634 652 662 u|549 593 637 675 u|512 540 597 627 u|532 536 877 902 d|820 872 900 930 d|802 810 897 940 u|793 800 817 832 u|755 794 797 865 u|788 797 871 896 d|820 822 854 864 u|826 847 903 940 d|743 900 903 917 d|875 883 900 922 d|806 811 897 944 u|808 815 1007 1040 d|970 1001 1033 1123 u|980 1005 1096 1105 d|936 1010 1075 1103 u|968 1006 1033 1059 d|980 1032 1184 1216 d|1112 1173 1182 1250 u|944 1063 1171 1176 u|879 906 1048 1090 u|900 912 971 1010 d|937 974 1001 1077 d|905 948 1003 1012 u|908 951 1210 1240 d|1148 1197 1212 1244 u|1175 1181 1249 1299 d|1234 1252 1428 1440 d|1192 1247 1430 1435 u|1030 1069 1246 1315 u|1015 1039 1208 1228 d|1180 1204 1208 1276 d|1162 1194 1199 1285 u|1124 1197 1276 1299 d|1212 1283 1329 1380 d|1028 1048 1315 1340 u|946 1042 1100 1138 d|925 1042 1104 1140 u|877 958 1045 1098 u|930 960 1007 1072 d|946 980 1033 1044 u|914 975 1066 1070 d|1034 1070 1374 1378 d|1258 1306 1374 1410 u|1253 1309 1406 1420 d|1312 1347 1421 1478 u|1186 1200 1345 1376 u|1153 1193 1241 1277 d|1178 1226 1238 1299 u|1148 1167 1229 1296 u|1072 1164 1199 1216 d|1166 1202 1223 1266 d|1180 1226 1318 1321 d|1264 1300 1312 1352 u|1130 1208 1297 1373 u|1186 1220 1235 1265 u|1150 1199 1217 1256 u|1195 1201 1303 1330 d|1072 1099 1306 1320 u|1030 1048 1096 1114 u|924 936 1048 1058 u` }
];

// Bollinger bands: upper, middle, lower; one list of points per block.
const BANDS = [
  ["43,396 55,368 67,314 79,302 91,296 103,242 115,268 127,284 139,268 151,280 163,270 175,270 187,315 199,382 211,392 223,368 247,322 259,290 271,266 283,264 295,264 307,281 319,247 331,238 343,242 355,235 367,212 379,213 391,208 403,198 415,196 427,181 439,166 451,172 463,215 475,270 487,345 499,450 511,560 523,655 535,715 547,795 559,797 571,821 583,823 595,844 607,830 619,826 631,805 643,785 655,770 667,748 679,733 691,737 703,755 715,777 727,750 739,725 751,703 763,697 787,699 811,695 823,695 835,700 847,712 859,732 871,770 883,798 895,828 907,875 919,930 931,972 943,1015 955,1052 979,1052 991,1010 1003,960 1015,915 1027,885 1039,850 1051,820 1063,795 1075,775 1087,748 1099,734 1123,723 1159,723 1171,733 1183,748 1195,757 1207,770 1219,796 1231,797 1243,800 1255,806 1267,813 1279,808 1291,796 1303,797 1315,810 1327,825 1339,840 1351,852 1363,856 1375,856 1387,840 1399,820 1411,780 1423,775 1435,765",
   "97,632 109,590 121,553 133,528 145,512 157,445 169,415 181,387 193,355 205,330 217,298 229,296 241,315 253,338 265,343 289,351 313,350 325,383 337,387 349,380 361,345 373,265 385,220 397,206 409,194 433,190 445,193 457,204 493,201 505,197 517,189 529,172 541,158 553,147 565,140 577,142 589,150 601,184 613,264 625,340 637,400 649,444 661,468 673,521 685,533 709,543 733,535 745,522 757,509 769,498 793,495 805,488 817,502 829,504 841,522 853,560 865,610 877,665 889,760 901,850 913,900 925,950 937,990 949,1020 961,1045 973,1057 985,1044 997,1040 1009,1040 1021,1055 1033,1055 1045,1028 1057,1010 1069,1000 1081,985 1093,965 1105,935 1117,903 1129,880 1141,868 1153,862 1165,848 1177,837 1189,828 1201,821 1213,817 1237,822 1249,832 1261,843 1273,818 1285,775 1297,740 1309,724 1321,727 1357,727 1369,706",
   "91,175 103,125 115,105 127,82 133,78 151,78 175,88 187,108 199,135 211,170 223,215 235,265 247,340 259,450 271,480 283,530 295,575 307,621 331,631 343,622 355,606 367,599 379,606 391,660 403,675 415,668 439,670 451,650 463,635 475,605 487,570 499,530 511,492 523,492 535,495 547,492 575,490 589,512 605,532 619,553 643,555 655,548 667,540 679,525 691,537 703,550 715,560 727,585 739,640 751,710 763,717 775,726 787,740 799,747 811,766 823,770 835,755 847,766 859,785 871,810 883,855 895,867 907,877 931,880 943,888 955,880 967,857 979,850 991,861 1003,877 1015,885 1027,911 1045,900 1063,900 1075,911 1099,921 1159,921 1171,935 1183,946 1195,965 1207,990 1219,1004 1231,996"],
  ["43,770 67,727 91,707 103,682 127,700 139,690 163,690 175,670 199,625 223,588 235,582 247,567 259,548 271,530 283,524 295,527 319,553 331,568 343,597 355,606 379,643 391,657 403,685 415,705 427,738 439,768 451,798 463,842 475,880 487,915 499,950 511,983 523,1020 535,1042 547,1055 571,1065 595,1070 619,1065 631,1060 643,1045 655,1036 667,1023 679,998 691,980 703,963 715,954 727,961 751,980 763,986 787,992 799,1010 823,1040 835,1058 847,1072 859,1085 871,1106 883,1120 907,1147 931,1172 943,1184 955,1194 967,1190 979,1186 991,1172 1003,1160 1027,1135 1051,1090 1075,1050 1099,1024 1123,997 1135,984 1159,980 1171,973 1195,957 1219,942 1231,943 1243,948 1267,967 1291,961 1303,965 1327,980 1351,995 1363,1001 1387,998 1399,984 1423,960 1435,959",
   "97,840 121,812 133,795 157,742 181,722 205,682 217,658 229,635 253,600 265,590 289,580 313,570 325,548 349,536 361,524 373,500 385,484 409,473 433,469 445,475 457,489 493,493 517,504 529,514 553,543 565,560 577,570 589,585 601,607 613,628 625,650 637,668 661,690 673,710 697,740 709,757 721,780 745,825 757,843 781,873 805,906 817,930 829,950 841,980 853,1010 865,1040 877,1070 889,1100 901,1118 913,1133 925,1150 937,1167 961,1185 985,1207 1009,1230 1021,1239 1033,1239 1045,1230 1069,1213 1093,1195 1117,1166 1141,1152 1153,1151 1177,1130 1189,1123 1201,1115 1213,1100 1225,1080 1237,1055 1249,1030 1261,1005 1285,975 1297,957 1309,942 1321,939 1357,939 1369,951",
   "91,455 103,475 115,498 139,525 163,532 175,560 199,608 223,650 235,675 247,712 259,745 271,765 295,798 319,830 343,850 367,865 379,880 391,892 415,895 439,897 463,888 475,876 487,863 511,828 535,833 559,822 583,803 607,780 619,773 631,774 643,778 667,797 691,830 703,848 715,875 739,928 751,945 775,957 787,958 799,985 823,1025 835,1050 847,1068 859,1074 883,1110 907,1130 919,1146 943,1152 967,1130 979,1129 1003,1137 1015,1160 1027,1175 1051,1193 1075,1180 1087,1178 1111,1184 1147,1190 1159,1184 1183,1200 1195,1214 1207,1220 1231,1220"],
  ["43,1143 55,1132 67,1134 91,1115 103,1121 127,1121 139,1104 163,1107 175,1065 187,975 199,865 211,825 223,808 235,814 259,802 271,795 283,777 295,793 307,797 319,860 331,890 343,940 355,980 367,1035 379,1075 391,1102 403,1175 415,1225 427,1300 439,1365 451,1420 463,1465 475,1493 487,1490 499,1460 511,1410 523,1380 535,1368 547,1321 559,1320 571,1309 583,1308 595,1295 619,1300 631,1311 655,1305 667,1290 679,1260 691,1215 703,1165 715,1130 727,1175 739,1225 751,1262 763,1270 787,1278 799,1335 811,1365 823,1390 835,1420 847,1433 871,1440 895,1438 907,1415 919,1386 931,1370 943,1355 955,1334 967,1328 979,1318 991,1328 1003,1352 1015,1378 1027,1392 1039,1380 1051,1376 1063,1358 1075,1334 1087,1322 1099,1315 1111,1290 1135,1242 1147,1238 1159,1238 1171,1215 1183,1180 1195,1160 1207,1130 1219,1085 1231,1090 1243,1103 1267,1120 1291,1131 1327,1130 1351,1140 1375,1147 1399,1145 1411,1152 1423,1147 1435,1147",
   "97,1043 121,1056 133,1048 145,1030 157,1040 181,1056 193,1050 205,1033 217,1018 229,980 241,920 253,865 265,838 277,824 289,810 301,803 313,785 325,715 337,697 349,692 361,712 373,745 385,752 433,750 445,762 469,776 493,785 505,795 517,818 529,850 541,892 553,930 565,972 577,995 589,1015 601,1022 613,995 625,960 637,940 649,915 661,910 673,896 685,912 697,925 709,970 721,1020 733,1060 745,1120 757,1180 769,1210 781,1240 793,1275 805,1318 817,1350 829,1395 841,1430 853,1455 865,1465 877,1475 889,1440 901,1395 913,1370 925,1350 937,1330 949,1320 961,1316 973,1325 985,1360 997,1390 1009,1410 1021,1420 1033,1423 1045,1430 1057,1438 1069,1432 1105,1427 1117,1424 1141,1433 1153,1436 1177,1430 1201,1413 1213,1390 1225,1345 1237,1285 1249,1215 1261,1165 1273,1158 1285,1160 1297,1170 1309,1157 1321,1152 1345,1148 1357,1155 1369,1200 1381,1260 1393,1310 1405,1400 1417,1450 1429,1478",
   "151,974 163,990 175,1022 187,1050 199,1074 211,1081 223,1080 235,1087 247,1083 259,1043 271,1047 283,1040 295,1020 307,1010 319,1030 331,1055 343,1080 355,1110 367,1135 379,1158 391,1124 403,1119 439,1123 451,1132 475,1143 487,1147 511,1166 535,1175 547,1168 559,1155 571,1133 583,1100 595,1055 607,1025 619,990 643,1005 655,1035 667,1070 679,1105 691,1125 703,1150 715,1195 727,1223 739,1218 751,1178 787,1185 799,1215 811,1235 823,1290 835,1340 847,1366 871,1374 883,1365 895,1375 907,1390 919,1415 931,1412 979,1409 1003,1400 1015,1430 1027,1440 1039,1462 1051,1482 1063,1475 1075,1450 1123,1448 1135,1459 1147,1461 1159,1451 1183,1454 1195,1459 1207,1442 1219,1438 1231,1443"]
];

const WIDE = 4000, HEIGHT = 893;
const rows = 25, step = 881 / 24;
let out = '';

// Dotted grid
for (let x = 32; x < WIDE; x += 32) out += `<path d="M${x}.5 0V${HEIGHT}" stroke="#778899" stroke-dasharray="3 3"/>`;
for (let i = 0; i < rows; i++) out += `<path d="M1 ${Math.round(6 + i * step) + 0.5}H${WIDE}" stroke="#778899" stroke-dasharray="3 3"/>`;
out += `<path d="M0 610.5H${WIDE}" stroke="#778899"/>`;

// Candles
for (const b of BLOCKS) {
  b.rows.split('|').forEach((row, i) => {
    const p = row.split(' ');
    const [h, t, l, w] = p.slice(0, 4).map(v => Math.round(b.y + v / b.k));
    const x = (b.start + i) * 4;
    out += `<rect x="${x}" y="${h}" width="1" height="${w - h + 1}" fill="#0f0"/>`;
    out += `<rect x="${x - 1}" y="${t}" width="3" height="${Math.max(1, l - t)}" fill="#0f0"/>`;
    if (l - t > 2) out += `<rect x="${x}" y="${t + 1}" width="1" height="${l - t - 2}" fill="${p[4] === 'u' ? '#000' : '#fff'}"/>`;
  });
}

// Bands
for (const band of BANDS) {
  const pts = band.flatMap((seg, n) => seg.split(' ').map(s => {
    const [x, y] = s.split(',').map(Number);
    return `${Math.round(BLOCKS[n].x + x / 3)},${Math.round(BLOCKS[n].y + y / BLOCKS[n].k)}`;
  }));
  out += `<polyline points="${pts.join(' ')}" fill="none" stroke="#3cb371" shape-rendering="crispEdges"/>`;
}

// Levels and trend lines
for (const y of [349, 512, 675, 877]) out += `<rect x="0" y="${y}" width="${WIDE}" height="1" fill="#ff0"/>`;
out += `<rect x="0" y="498" width="${WIDE}" height="2" fill="#f00"/>`;
out += '<path d="M0 279L1344 591" stroke="#00f" shape-rendering="crispEdges"/>';
out += '<path d="M564 151L1486 734M608 532L1312 859" stroke="#f00" stroke-width="3" fill="none"/>';
document.getElementById('plot').innerHTML = out;

const prices = document.getElementById('prices');
for (let i = 0; i < rows; i++) {
  const s = document.createElement('span');
  s.className = 'price';
  s.textContent = (0.8905 - i * 0.0035).toFixed(4);
  prices.appendChild(s);
}
const dates = document.getElementById('dates');
for (const d of ['18 Feb 2013', '8 Mar 2013', '27 Mar 2013', '15 Apr 2013', '3 May 2013', '22 May 2013', '10 Jun 2013', '28 Jun 2013', '17 Jul 2013', '5 Aug 2013', '23 Aug 2013', '11 Sep 2013', '30 Sep 2013', '18 Oct 2013', '6 Nov 2013', '25 Nov 2013', '13 Dec 2013', '2 Jan 2014', '24 Jan 2014', '17 Feb 2014']) {
  const s = document.createElement('span');
  s.className = 'date';
  s.textContent = d;
  dates.appendChild(s);
}
```
